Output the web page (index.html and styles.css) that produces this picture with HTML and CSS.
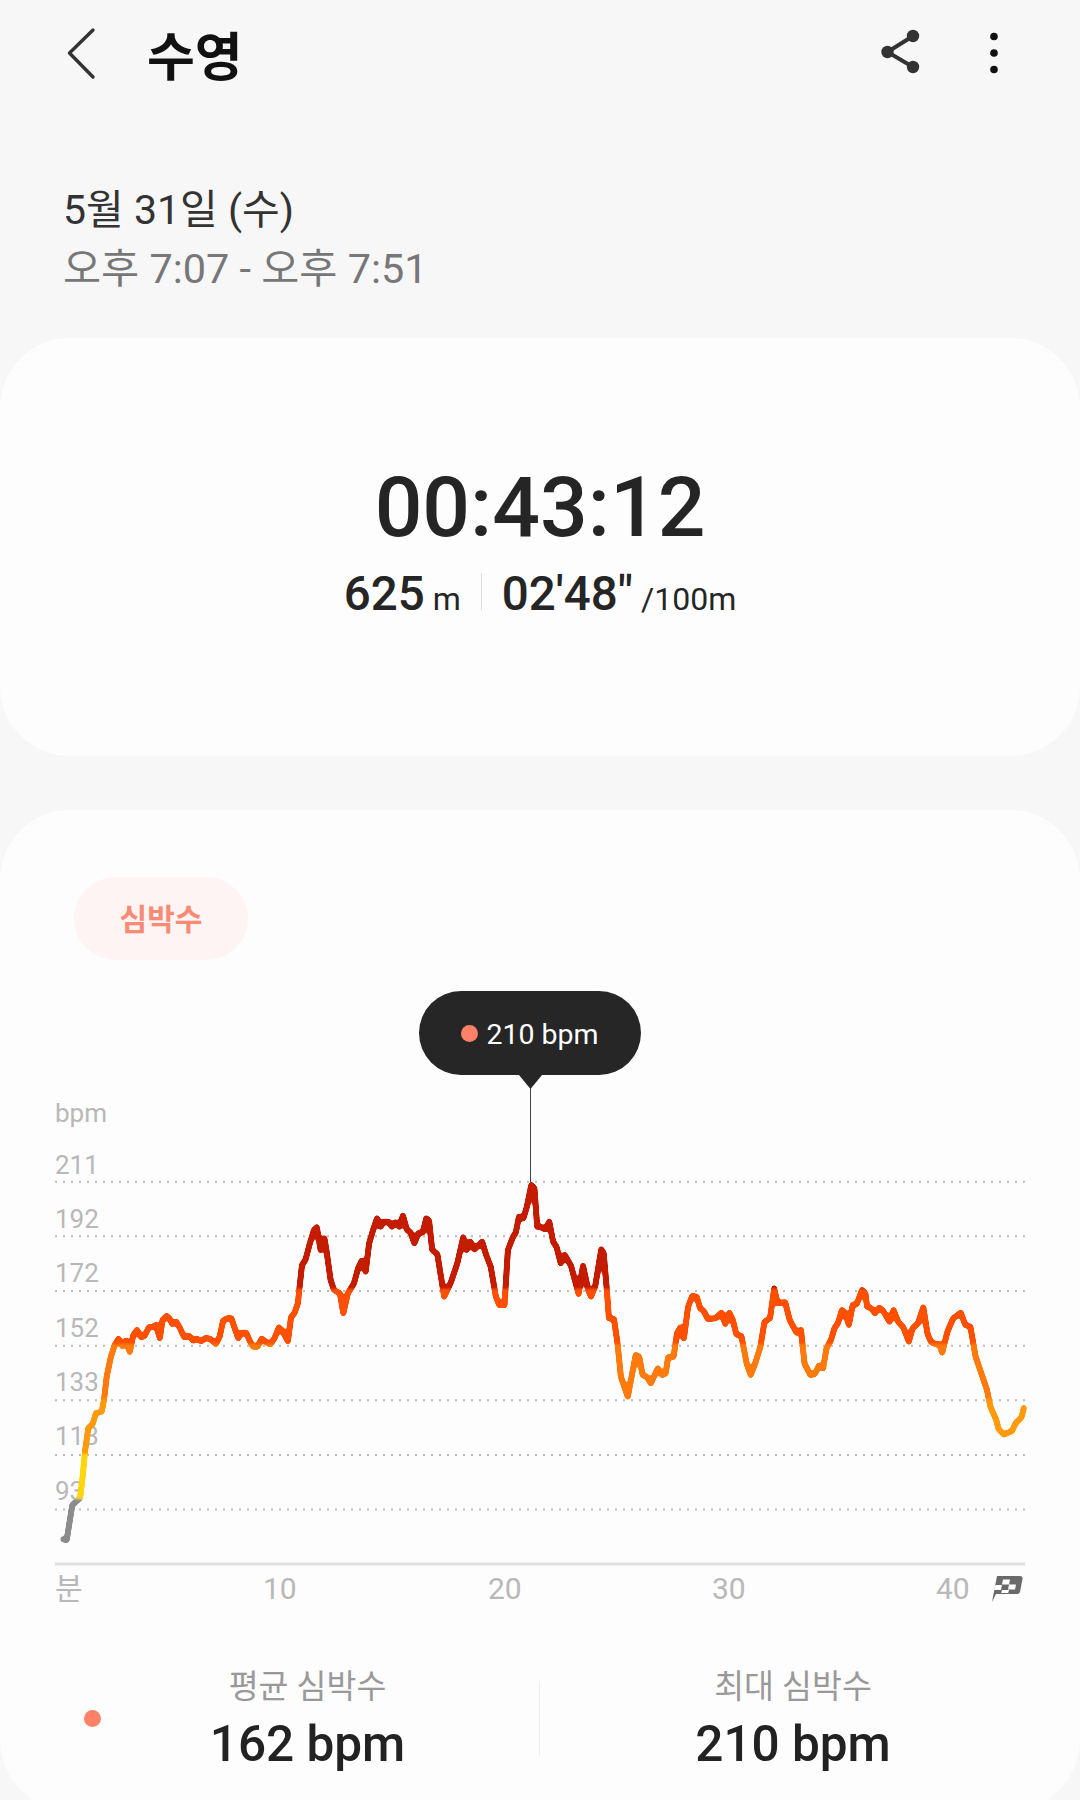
FILE: index.html
```html
<!DOCTYPE html>
<html lang="ko">
<head>
  <meta charset="UTF-8">
  <meta name="viewport" content="width=device-width, initial-scale=1.0">
  <title>수영</title>
  <link rel="stylesheet" href="styles.css">
</head>
<body>
  <header class="topbar">
    <svg class="back-icon" width="34" height="56" viewBox="0 0 34 56">
      <path d="M28 5 L4.5 28 L28 52" fill="none" stroke="#333" stroke-width="3.4" stroke-linecap="round" stroke-linejoin="round"/>
    </svg>
    <h1 class="title">수영</h1>
    <svg class="share-icon" width="44" height="50" viewBox="0 0 44 50">
      <path d="M33 9 L7.5 25 L33 40" fill="none" stroke="#333" stroke-width="4"/>
      <circle cx="33" cy="9" r="6.2" fill="#333"/>
      <circle cx="7.5" cy="25" r="6.2" fill="#333"/>
      <circle cx="33" cy="40" r="6.2" fill="#333"/>
    </svg>
    <svg class="more-icon" width="10" height="42" viewBox="0 0 10 42">
      <circle cx="5" cy="4.5" r="3.8" fill="#111"/>
      <circle cx="5" cy="21" r="3.8" fill="#111"/>
      <circle cx="5" cy="37.5" r="3.8" fill="#111"/>
    </svg>
  </header>

  <section class="when">
    <div class="when-date">5월 31일 (수)</div>
    <div class="when-time">오후 7:07 - 오후 7:51</div>
  </section>

  <section class="card summary">
    <div class="duration">00:43:12</div>
    <div class="summary-row">
      <span class="summary-value">625</span><span class="summary-unit">m</span>
      <span class="summary-divider"></span>
      <span class="summary-value">02'48"</span><span class="summary-unit">/100m</span>
    </div>
  </section>

  <section class="card heart">
    <div class="pill">심박수</div>

    <div class="chart">
      <!-- viewBox uses page coordinates so the trace is easy to check against the screen -->
      <svg class="chart-svg" width="1080" height="680" viewBox="0 960 1080 680">
        <defs>
          <linearGradient id="zones" gradientUnits="userSpaceOnUse" x1="0" y1="1180" x2="0" y2="1545">
            <stop offset="0" stop-color="#c41c00"/>
            <stop offset="0.3" stop-color="#c41c00"/>
            <stop offset="0.3" stop-color="#ff4f00"/>
            <stop offset="0.4501" stop-color="#ff4f00"/>
            <stop offset="0.4501" stop-color="#ff7a0a"/>
            <stop offset="0.6" stop-color="#ff7a0a"/>
            <stop offset="0.6" stop-color="#ff9a0a"/>
            <stop offset="0.7497" stop-color="#ff9a0a"/>
            <stop offset="0.7497" stop-color="#ffd60a"/>
            <stop offset="0.8729" stop-color="#ffd60a"/>
            <stop offset="0.8729" stop-color="#8c8c8c"/>
            <stop offset="1" stop-color="#8c8c8c"/>
          </linearGradient>
          <!-- rounds off the corners of the traced line -->
          <filter id="soften" filterUnits="userSpaceOnUse" x="40" y="1160" width="1000" height="400">
            <feGaussianBlur stdDeviation="1.3"/>
            <feComponentTransfer>
              <feFuncA type="linear" slope="5" intercept="-1.9"/>
            </feComponentTransfer>
          </filter>
        </defs>

        <text class="axis-label" x="55" y="1122">bpm</text>
        <text class="axis-label" x="55" y="1174">211</text>
        <text class="axis-label" x="55" y="1228">192</text>
        <text class="axis-label" x="55" y="1282">172</text>
        <text class="axis-label" x="55" y="1337">152</text>
        <text class="axis-label" x="55" y="1391">133</text>
        <text class="axis-label" x="55" y="1445">113</text>
        <text class="axis-label" x="55" y="1500">93</text>

        <g class="grid-line">
          <line x1="55" y1="1181.7" x2="1026" y2="1181.7"/>
          <line x1="55" y1="1236.3" x2="1026" y2="1236.3"/>
          <line x1="55" y1="1291" x2="1026" y2="1291"/>
          <line x1="55" y1="1345.7" x2="1026" y2="1345.7"/>
          <line x1="55" y1="1400.3" x2="1026" y2="1400.3"/>
          <line x1="55" y1="1455" x2="1026" y2="1455"/>
          <line x1="55" y1="1509.6" x2="1026" y2="1509.6"/>
        </g>

        <line class="marker-line" x1="530.5" y1="1085" x2="530.5" y2="1186"/>

        <polyline class="trace" filter="url(#soften)" points="63.3,1539.3 66.7,1540 68.3,1530 72.3,1505 80,1498 82.3,1480 85,1451.7 88.3,1428 92.7,1424 96,1413 101.7,1411.7 104,1400 106.7,1376.7 110.9,1356.7 114.7,1345 118.5,1338.7 122.2,1346 126,1340.7 129.8,1352 133.3,1335 137,1330 141.2,1337.3 144.6,1336 148.8,1327.3 153.2,1326.7 156,1325 159.8,1338.3 162.5,1320 166.7,1316 169.4,1318.3 172.2,1324 176.3,1321.7 179.8,1327.7 184.2,1337.3 189.4,1336 193.5,1340.7 197,1338.7 201.1,1341.3 205.6,1338 210,1338.7 215.9,1344 219.7,1336.7 223.1,1320.7 227.3,1318.3 231.4,1318.3 234.2,1326.7 238.3,1338.3 241.7,1332.7 246.2,1332.7 249.7,1340.7 253.1,1346.7 257.6,1346.7 261.7,1338.7 266.9,1342.7 270.3,1344.3 274.5,1338.3 278.9,1327.3 282.4,1330.7 287.9,1341.3 291,1317.3 294.4,1313.3 297.9,1303.3 299.6,1286.7 302,1265 305.4,1260 309.9,1243.3 314,1230 316.8,1227.3 320.6,1250 324.4,1238.3 326.4,1250 330.6,1280 334,1290 339.9,1293.3 343.3,1313.3 347.8,1293.3 354,1283.3 358.1,1268.3 361.6,1260.7 365.7,1271.7 369.1,1243.3 373.6,1228.3 377.1,1218.3 380.5,1226.7 384,1221.7 388.4,1221.7 391.9,1226.7 395.3,1222.3 399.4,1226.7 402.9,1215.7 407,1230 410.5,1232.3 414.3,1243.3 418.4,1233.3 422.9,1232.3 426.3,1218.3 429.1,1220.7 432.2,1250 437.3,1254 444.2,1296.7 451.1,1281.7 457.3,1263.3 463.2,1237.3 466.6,1250 470.4,1241.7 474.5,1249.3 482.1,1241.7 486.2,1255 490.7,1266.7 495.9,1296.7 499.3,1305 504.5,1305 507.9,1250 513.1,1236.7 515.8,1232.7 518.9,1216.7 523.4,1218.3 526.9,1206.7 531.3,1185 534.4,1188.3 537.2,1226.7 540,1226.7 545.2,1229.3 549.3,1221.7 553.1,1241.7 556.5,1246.7 560.7,1263.3 564.8,1255 571,1265.7 578.6,1294 583,1265.7 588.2,1290 591,1296.7 595.1,1286.7 601.3,1249.3 603.7,1253.3 607.1,1293.3 608.9,1318.3 614,1319 617.5,1343.3 620.9,1376.7 627.8,1396.7 635.7,1355 639.2,1356.7 642.6,1375 646.7,1376.7 650.9,1383.3 657.8,1368.3 662.2,1375 665.7,1373.3 668.1,1357.3 673.6,1356.7 677,1333.3 680.5,1327.3 683.9,1338.3 688.1,1306.7 692.2,1296 696.7,1296.7 700.1,1308.3 703.6,1310.7 707.7,1319 715.6,1318.3 721.5,1312.7 725.3,1324 729.4,1312.7 732.8,1320 736.3,1334.3 741.4,1336 746.6,1363.3 750.7,1375 755.2,1363.3 760.4,1346.7 764.5,1321.7 770,1318.3 774.2,1288.3 777.6,1303.3 785.2,1302.3 789.7,1320 796.5,1332.7 801,1330 804.5,1363.3 810.3,1375 814.8,1374 818.9,1365.7 823.1,1368.3 826.5,1348.3 831,1340 834.4,1328.3 837.9,1323.3 842,1310 845.4,1313.3 848.9,1325 852.7,1305 856.8,1304 862,1290 865.4,1293.3 867.1,1306.7 871.3,1308.3 875,1313.3 879.2,1307.7 883.3,1311 889.5,1321.7 893.6,1310 898.1,1321.7 903.3,1327.3 908.8,1341.7 912.6,1328.3 918.1,1323.3 923.3,1307.3 927.4,1333.3 930.8,1341.7 936,1344.3 939.4,1344.3 942.2,1352.7 947.4,1331.7 953.2,1318.3 960.8,1312.7 965.3,1325 970.4,1326.7 975.6,1356.7 980.8,1371.7 987,1390 990.4,1406.7 996.3,1420 998.5,1429 1004,1434.6 1012,1431 1015.7,1423 1021.5,1417.4 1023.8,1408"/>

        <line class="axis-line" x1="55" y1="1564" x2="1025" y2="1564"/>
        <text class="axis-label time-label" x="55" y="1599">분</text>
        <text class="axis-label time-label" x="263" y="1599">10</text>
        <text class="axis-label time-label" x="488" y="1599">20</text>
        <text class="axis-label time-label" x="712" y="1599">30</text>
        <text class="axis-label time-label" x="936" y="1599">40</text>

        <!-- finish flag -->
        <path d="M997 1576 H1020 Q1023 1576 1022.5 1579 L1020 1592 Q1019.5 1594 1017 1594 H996 L992 1602 Z" fill="#6a6a6a"/>
        <path d="M1003 1579.5 h7 l-1 5 h-7 Z M995.5 1585 h6.5 l-1 5 h-7 Z M1009 1584.5 h7 l-1 5 h-7 Z M1002 1590 h7 l-.8 3 h-7 Z" fill="#fff"/>
      </svg>

      <div class="tooltip">
        <span class="tooltip-dot"></span>210 bpm
      </div>
    </div>

    <div class="stats">
      <span class="stats-dot"></span>
      <div class="stat stat-avg">
        <div class="stat-label">평균 심박수</div>
        <div class="stat-value">162 bpm</div>
      </div>
      <div class="stats-divider"></div>
      <div class="stat stat-max">
        <div class="stat-label">최대 심박수</div>
        <div class="stat-value">210 bpm</div>
      </div>
    </div>
  </section>
</body>
</html>
```

FILE: styles.css
```css
/* General */
html, body {
  height: 1800px;
  overflow: hidden;
}

body {
  margin: 0;
  background-color: #f7f7f7;
  color: #252525;
  font-family: Roboto, "Noto Sans CJK KR", sans-serif;
}

/* Top bar */
.topbar {
  display: flex;
  align-items: center;
  height: 106px;
  padding: 0 81px 0 65px;
}

.title {
  margin: 0 0 0 48px;
  font-size: 52px;
  font-weight: 700;
  color: #111;
}

.share-icon {
  margin-left: auto;
  margin-top: -2px;
}

.more-icon {
  margin-left: 65px;
}

/* Date */
.when {
  height: 232px;
  padding: 76px 0 0 63px;
  box-sizing: border-box;
}

.when-date {
  font-size: 41px;
  line-height: 56px;
  color: #333;
}

.when-time {
  margin-top: 3px;
  font-size: 41.4px;
  line-height: 56px;
  color: #777;
}

/* Cards */
.card {
  background: #fdfdfd;
  border-radius: 70px;
}

.summary {
  height: 418px;
  margin-bottom: 54px;
  padding-top: 120px;
  box-sizing: border-box;
  text-align: center;
}

.duration {
  font-size: 84px;
  font-weight: 500;
  line-height: 100px;
}

.summary-row {
  display: flex;
  justify-content: center;
  align-items: baseline;
  margin-top: 4px;
  font-weight: 500;
}

.summary-value {
  font-size: 47.5px;
  line-height: 64px;
}

.summary-unit {
  margin-left: 8px;
  font-size: 32px;
  font-weight: 400;
}

.summary-divider {
  width: 1px;
  height: 37px;
  margin: 0 20px 0 20px;
  background: #ddd;
}

/* Heart rate */
.heart {
  height: 1000px;
  padding-top: 67px;
  box-sizing: border-box;
}

.pill {
  display: flex;
  align-items: center;
  justify-content: center;
  width: 174px;
  height: 83px;
  margin-left: 74px;
  padding-bottom: 4px;
  box-sizing: border-box;
  border-radius: 42px;
  background: #fdf4f3;
  color: #f98a75;
  font-size: 30px;
  font-weight: 700;
}

.chart {
  position: relative;
  height: 680px;
}

.chart-svg {
  display: block;
}

.axis-label {
  font-size: 26px;
  fill: #b8b8b8;
}

.time-label {
  font-size: 30px;
}

.grid-line line {
  stroke: #bdbdbd;
  stroke-width: 2;
  stroke-dasharray: 2 6;
}

.axis-line {
  stroke: #e0e0e0;
  stroke-width: 3;
}

.marker-line {
  stroke: #444;
  stroke-width: 1;
}

.trace {
  fill: none;
  stroke: url(#zones);
  stroke-width: 6;
  stroke-linejoin: round;
  stroke-linecap: round;
}

/* Tooltip over the chart */
.tooltip {
  position: absolute;
  top: 31px;
  left: 419px;
  display: flex;
  align-items: center;
  justify-content: center;
  width: 222px;
  height: 84px;
  padding-top: 3px;
  box-sizing: border-box;
  border-radius: 42px;
  background: #262626;
  color: #fff;
  font-size: 28.5px;
}

.tooltip::after {
  content: "";
  position: absolute;
  left: 100px;
  bottom: -14px;
  width: 23px;
  height: 14px;
  background: #262626;
  clip-path: polygon(0 0, 100% 0, 50% 100%);
}

.tooltip-dot {
  width: 17px;
  height: 17px;
  margin-right: 8px;
  margin-top: -3px;
  border-radius: 50%;
  background: #ff8268;
}

/* Bottom stats */
.stats {
  display: flex;
  align-items: center;
  height: 115px;
  margin-top: 21px;
  padding-left: 84px;
}

.stats-dot {
  width: 17px;
  height: 17px;
  margin-top: -1px;
  border-radius: 50%;
  background: #ff8268;
}

.stat {
  text-align: center;
}

.stat-avg {
  width: 413px;
  margin-right: 25px;
}

.stat-max {
  width: 506px;
}

.stats-divider {
  width: 1px;
  height: 76px;
  background: #eee;
}

.stat-label {
  font-size: 32.5px;
  line-height: 44px;
  color: #999;
}

.stat-value {
  margin-top: 6px;
  font-size: 49.5px;
  font-weight: 500;
  line-height: 58px;
  color: #222;
}
```
